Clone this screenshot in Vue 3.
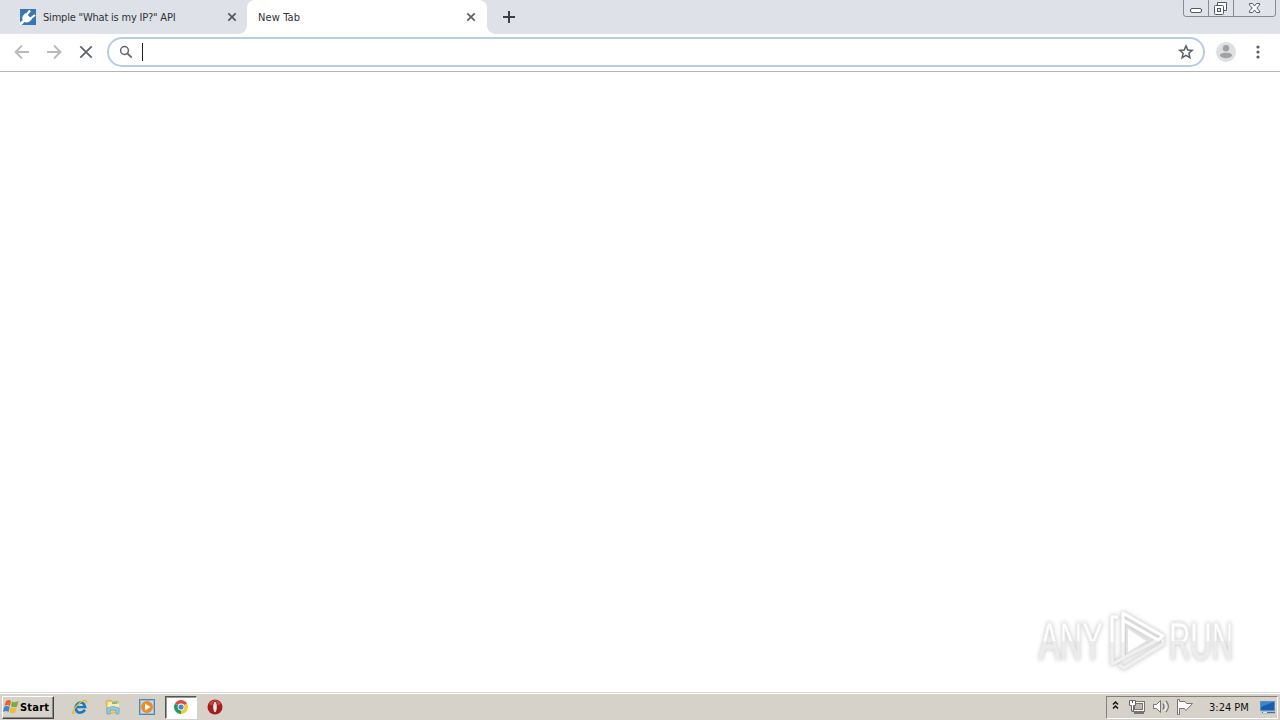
<script setup>
const background = { title: 'Simple "What is my IP?" API' }
const active = { title: 'New Tab' }
</script>

<template>
  <div class="screen">
    <header class="tabs">
      <div class="tab back-tab">
        <svg class="fav" width="16" height="16" viewBox="0 0 16 16">
          <rect width="16" height="16" fill="#3978ae" />
          <path d="M0 13.500L2.800 11C1.500 8 3 6.500 5.500 4L12 10C9.500 13.500 6.500 14 4.500 13L1.500 16H0Z" fill="#fff" />
          <path d="M6.500 6L10 1.500M10.500 9.500L15 6" stroke="#fff" stroke-width="2.200" />
        </svg>
        <span class="label long">{{ background.title }}</span>
        <svg class="close" width="10" height="10" viewBox="0 0 10 10"><path d="M1.300 1.300L8.700 8.700M8.700 1.300L1.300 8.700" stroke="#54585d" stroke-width="1.700" /></svg>
      </div>
      <div class="tab front-tab">
        <span class="label short">{{ active.title }}</span>
        <svg class="close" width="10" height="10" viewBox="0 0 10 10"><path d="M1.300 1.300L8.700 8.700M8.700 1.300L1.300 8.700" stroke="#5b5e62" stroke-width="1.700" /></svg>
      </div>
      <svg class="plus" width="12" height="12" viewBox="0 0 12 12"><path d="M6 0V12M0 6H12" stroke="#3c4043" stroke-width="2" /></svg>
      <svg class="caption" width="94" height="17" viewBox="0 0 94 17">
        <path d="M.5 0V14Q.5 16.500 3 16.500H90Q92.500 16.500 92.500 14V0M25.500 0V16M50.500 0V16" fill="#e0e3e9" stroke="#868a92" />
        <rect x="7.500" y="8.500" width="11" height="4" rx="1.500" fill="#fff" stroke="#555a62" />
        <path d="M34.500 2.500H43.500V10.500H34.500Z" fill="#fff" stroke="#555a62" />
        <rect x="31.500" y="5.500" width="9" height="9" rx="1" fill="#fff" stroke="#555a62" />
        <rect x="34.500" y="8.500" width="3" height="3" fill="#e2e5eb" stroke="#555a62" />
        <path d="M66.500 3.500H69.500L71.500 6L73.500 3.500H76.500V5L73.800 8L76.500 11V12.500H73.500L71.500 10L69.500 12.500H66.500V11L69.200 8L66.500 5Z" fill="#fff" stroke="#555a62" />
      </svg>
    </header>

    <nav class="toolbar">
      <svg class="nav" width="108" height="37" viewBox="0 0 108 37">
        <g fill="none" stroke-width="1.800">
          <path d="M29 18H16M22 11.500L15.500 18L22 24.500M47 18H60M54 11.500L60.500 18L54 24.500" stroke="#b8babc" />
          <path d="M80.300 12.300L91.700 23.700M91.700 12.300L80.300 23.700" stroke="#5f6368" />
        </g>
      </svg>
      <div class="omnibox">
        <svg class="search" width="14" height="14" viewBox="0 0 14 14"><circle cx="5.500" cy="5.500" r="3.900" fill="none" stroke="#62666a" stroke-width="1.500" /><path d="M8.300 8.300L12.700 12.700" stroke="#62666a" stroke-width="1.800" /></svg>
        <span class="caret"></span>
        <svg class="star" width="16" height="16" viewBox="0 0 16 16"><path d="M8 1.900L9.800 6L14.200 6.400L10.900 9.300L11.900 13.600L8 11.300L4.100 13.600L5.100 9.300L1.800 6.400L6.200 6Z" fill="none" stroke="#5a5e65" stroke-width="1.500" /></svg>
      </div>
      <svg class="avatar" width="20" height="20" viewBox="0 0 20 20"><circle cx="10" cy="10" r="10" fill="#dedfe1" /><circle cx="10" cy="6.300" r="3.200" fill="#a0a2a4" /><path d="M4 13.500C4 11.400 7 10.700 10 10.700S16 11.400 16 13.500C14 17 6 17 4 13.500Z" fill="#a0a2a4" /></svg>
      <svg class="dots" width="4" height="14" viewBox="0 0 4 14" fill="#5a5e63"><circle cx="2" cy="2" r="1.600" /><circle cx="2" cy="7" r="1.600" /><circle cx="2" cy="12" r="1.600" /></svg>
    </nav>

    <main class="page">
      <div class="watermark">
        <div class="word"><span class="any">ANY</span></div>
        <svg width="60" height="66" viewBox="0 0 60 66">
          <g fill="none" stroke-linejoin="round">
            <path d="M17 51V4L57 27L52 31L17 11M12 8H6V55L50 32M57 30V35L18 59L13 56M22 20V43L40 32Z" stroke="#e3e3e3" stroke-width="4" />
            <path d="M17 51V4L57 27L52 31L17 11M12 8H6V55L50 32M57 30V35L18 59L13 56" stroke="#f0f0f0" stroke-width="2.800" />
            <path d="M17 33V4L57 27L52 31L17 11M12 8H6V33" stroke="#fff" stroke-width="2.800" />
            <path d="M22 20V43L40 32Z" fill="#fff" />
          </g>
        </svg>
        <div class="word"><span class="run">RUN</span></div>
      </div>
    </main>

    <footer class="taskbar">
      <div class="start">
        <svg width="17" height="16" viewBox="0 0 17 16">
          <path d="M3 2Q6 0 8 2L7 7Q4 5 1.500 7Z" fill="#e86427" />
          <path d="M9 2.500Q12 4 15.500 2L14 7.500Q11 9 8 7.200Z" fill="#79ad3b" />
          <path d="M1.200 8Q4 6 6.700 8L5.500 13Q3 11 0 13Z" fill="#3d86ca" />
          <path d="M7.800 8.300Q11 10 13.700 8.500L12.300 13.500Q9 15 6.500 13.300Z" fill="#f1bc31" />
        </svg>
        <span>Start</span>
      </div>
      <svg class="ie" width="18" height="18" viewBox="0 0 18 18">
        <path d="M14 11.800Q10 16.500 6 13.500Q3 8.500 7 5.500Q12.500 2.500 14 9H6" fill="none" stroke="#167bc0" stroke-width="2.700" />
        <path d="M7.500 7.500Q9 5.200 11.500 7.500Z" fill="#d8ecf6" />
        <path d="M3.500 14.500C0 18 2 11 7 6.500C12 1.500 17 1 15 5" fill="none" stroke="#e9b82f" stroke-width="1.400" />
      </svg>
      <svg class="folder" width="18" height="18" viewBox="0 0 18 18">
        <path d="M2 3L7 2L8 4L14 3L15 14L3 16Z" fill="#eccb66" stroke="#caa64a" stroke-width=".7" />
        <path d="M4 4H10L15 6V12H3Z" fill="#f9edaa" /><path d="M8 4H13V6H8Z" fill="#7bbd83" />
        <path d="M3 16V10Q9 7 15 10V16H12V12H6V16Z" fill="#8dcdea" stroke="#549cc1" stroke-width=".6" />
      </svg>
      <svg class="media" width="16" height="16" viewBox="0 0 16 16"><rect x=".5" y=".5" width="15" height="15" fill="#8fbbe0" stroke="#4c88bb" /><rect x="2" y="2" width="12" height="12" fill="#c6e0f1" /><circle cx="8" cy="8" r="6" fill="#ed8c21" /><path d="M6 4.500L11.500 8L6 11.500Z" fill="#fff" /></svg>
      <div class="chrome">
        <svg width="14" height="14" viewBox="0 0 14 14"><path d="M7 7L.94 3.500A7 7 0 0 1 13.060 3.500Z" fill="#dd4b3e" /><path d="M7 7L13.060 3.500A7 7 0 0 1 7 14Z" fill="#f3ca35" /><path d="M7 7V14A7 7 0 0 1 .94 3.500Z" fill="#27985b" /><circle cx="7" cy="7" r="3.400" fill="#fff" /><circle cx="7" cy="7" r="2.600" fill="#4785dc" /></svg>
      </div>
      <svg class="opera" width="16" height="16" viewBox="0 0 16 16"><circle cx="8" cy="8" r="7.500" fill="#aa1c19" /><path d="M2 5Q8-3 14 5Q8 8 2 5Z" fill="#d76358" opacity=".65" /><ellipse cx="8" cy="8" rx="2.300" ry="5.800" fill="#f4e5e3" stroke="#76100e" stroke-width=".8" /></svg>
      <div class="tray">
        <svg class="trayicons" width="90" height="20" viewBox="0 0 90 20">
          <path d="M6 7.500L8.500 5L11 7.500M6 11.500L8.500 9L11 11.500" fill="none" stroke="#111" stroke-width="1.500" />
          <rect x="25.500" y="4.500" width="12" height="10" fill="#fff" stroke="#77756f" /><rect x="27.500" y="6.500" width="8" height="6" fill="#bdbab4" stroke="#77756f" />
          <path d="M27 16H37" stroke="#77756f" stroke-width="2" /><path d="M22.500 3.500H28.500V8.500H26.500V14H24.500V8.500H22.500Z" fill="#fff" stroke="#666" /><path d="M25.500 3V6" stroke="#666" />
          <path d="M46.500 7.500H49.500L53.500 3.500V15.500L49.500 11.500H46.500Z" fill="#fff" stroke="#77756f" />
          <path d="M56 6.500Q58 9.500 56 12.500M59 4Q64 9.500 59 15" fill="none" stroke="#77756f" stroke-width="1.200" /><path d="M57.500 5Q61 9.500 57.500 14" fill="none" stroke="#fff" stroke-width="1" />
          <path d="M70.500 2.500V17.500H72.500V11.500H77.500L79 13.500L85.500 6.500H79.500L78 4.500H72.500V2.500Z" fill="#fff" stroke="#77756f" />
        </svg>
        <span class="clock">3:24 PM</span>
        <svg class="desktop" width="16" height="14" viewBox="0 0 16 14"><rect x=".5" y="1.500" width="14" height="9" fill="#195dad" stroke="#5b91c9" /><path d="M1 2H14L1 7Z" fill="#3d83cd" /><path d="M2 12.500H15" stroke="#477099" stroke-width="1.500" /><path d="M3 12.500H7" stroke="#d7edf9" /></svg>
      </div>
    </footer>
  </div>
</template>

<style>
html, body { margin: 0; overflow: hidden; }
</style>

<style scoped>
.screen { width: 1280px; height: 720px; display: flex; flex-direction: column; background: #fff; color: #303238; font-family: "DejaVu Sans Condensed", "DejaVu Sans", sans-serif; font-size: 11px; }
svg { display: block; flex: none; }
.tabs { height: 34px; flex: none; display: flex; align-items: flex-start; background: #dee1e7; }
.tab { height: 34px; box-sizing: border-box; display: flex; align-items: center; }
.back-tab { width: 247px; padding-left: 20px; padding-right: 10px; }
.front-tab { width: 240px; padding-left: 11px; padding-right: 11px; background: #fff; border-radius: 8px 8px 0 0; position: relative; }
.front-tab::before, .front-tab::after { content: ""; position: absolute; bottom: 0; width: 8px; height: 8px; }
.front-tab::before { left: -8px; background: radial-gradient(circle at 0 0, transparent 7.500px, #fff 8px); }
.front-tab::after { right: -8px; background: radial-gradient(circle at 100% 0, transparent 7.500px, #fff 8px); }
.label { white-space: nowrap; line-height: 16px; padding-top: 1px; }
.long { margin-left: 7px; letter-spacing: -.2px; }
.short { letter-spacing: .12px; }
.close { margin-left: auto; }
.plus { margin: 11px 0 0 16px; }
.caption { margin-left: auto; margin-right: 3px; }
.toolbar { height: 38px; box-sizing: border-box; flex: none; display: flex; border-bottom: 1px solid #b2b5b8; }
.nav { margin-right: -1px; }
.omnibox { width: 1098px; height: 30px; box-sizing: border-box; margin-top: 3px; border: 2px solid #b5cdeb; border-radius: 15px; display: flex; align-items: center; padding: 0 9px 0 10px; }
.caret { width: 1px; height: 18px; margin-left: 9px; background: #202124; }
.star { margin-left: auto; }
.avatar { margin: 8px 0 0 11px; }
.dots { margin: 11px 0 0 20px; }
.page { flex: 1; min-height: 0; display: flex; justify-content: flex-end; align-items: flex-end; padding: 0 45px 17px 0; }
.watermark { display: flex; height: 66px; width: 198px; align-items: center; justify-content: space-between; filter: drop-shadow(0 0 2px #c4c4c4); }
.word { width: 66px; }
.any, .run { display: block; width: max-content; font: 51px/51px "Liberation Sans", sans-serif; color: transparent; background: linear-gradient(#fff 0 49%, #ececec 49%); background-clip: text; -webkit-text-stroke: .8px #ebebeb; transform-origin: left; white-space: nowrap; margin-top: -1px; }
.any { transform: translateX(2px) scaleX(.61); }
.run { transform: translateX(0) scaleX(.58); }
.taskbar { height: 28px; box-sizing: border-box; flex: none; display: flex; align-items: center; background: #d6d2ca; border-top: 1px solid #d9d7d2; box-shadow: inset 0 1px #fff; padding: 1px 2px 0; }
.start { width: 52px; height: 23px; box-sizing: border-box; display: flex; align-items: center; border: 1px solid; border-color: #fff #444 #444 #fff; box-shadow: inset -1px -1px #8d8a84; color: #000; font-weight: bold; }
.start span { letter-spacing: .2px; }
.ie { margin-left: 17px; }
.folder { margin-left: 15px; }
.media { margin-left: 17px; }
.chrome { width: 32px; height: 23px; box-sizing: border-box; margin-left: 10px; border: 1px solid; border-color: #555 #fff #fff #555; box-shadow: inset 1px 1px #999; background: #fff; display: flex; align-items: center; justify-content: center; }
.opera { margin-left: 10px; }
.tray { width: 172px; height: 23px; box-sizing: border-box; margin-left: auto; display: flex; align-items: center; border: 1px solid; border-color: #85817a #fff #fff #85817a; color: #111; }
.clock { margin-left: 12px; letter-spacing: 0; white-space: nowrap; }
.desktop { margin-left: auto; margin-right: 1px; }
</style>
